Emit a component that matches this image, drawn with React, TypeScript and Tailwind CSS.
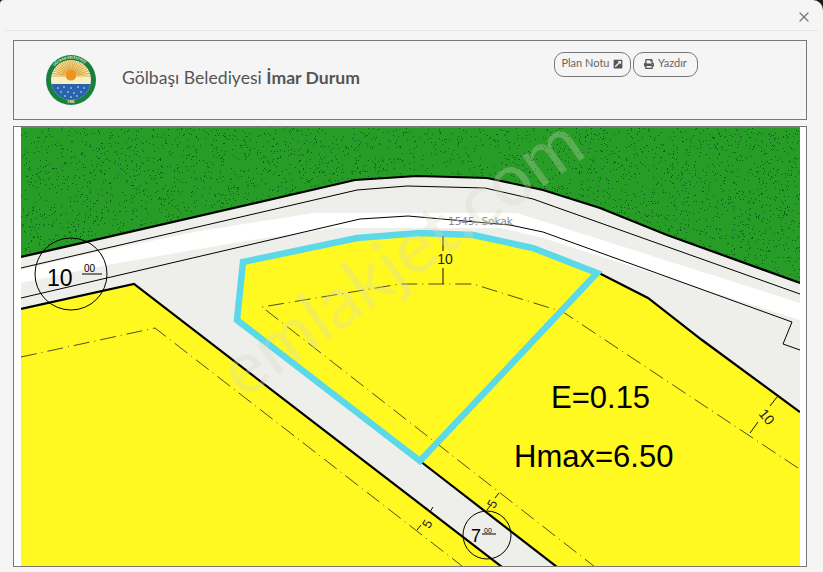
import { FaExternalLinkSquareAlt, FaPrint } from "react-icons/fa";
import { X } from "lucide-react";

// speckle on the green area, seeded so that it stays the same on every load
function speckle(count: number) {
  let seed = 7919;
  const next = () => {
    seed = (seed * 16807) % 2147483647;
    return seed / 2147483647;
  };
  let d = "";
  for (let i = 0; i < count; i++) {
    const x = 21 + Math.round(next() * 779);
    const y = 127 + Math.round(next() * 160);
    d += `M${x} ${y}h1v1h-1z`;
  }
  return d;
}

const dots = speckle(5200);

function Logo() {
  const rays = Array.from({ length: 23 }).map((_, i) => {
    const a = Math.PI + (i * Math.PI) / 22;
    return {
      x1: 25 + Math.cos(a) * 6,
      y1: 21 + Math.sin(a) * 6,
      x2: 25 + Math.cos(a) * 22,
      y2: 21 + Math.sin(a) * 22,
    };
  });
  const water = [
    [12, 33], [18, 32], [25, 33], [32, 32], [38, 33], [15, 37], [22, 37],
    [28, 38], [35, 37], [19, 41], [25, 42], [31, 41],
  ];

  return (
    <svg viewBox="0 0 50 50" className="w-[50px] h-[50px]">
      <clipPath id="logo-inner">
        <circle cx="25" cy="25" r="20" />
      </clipPath>
      <circle cx="25" cy="25" r="25" fill="#17803f" />
      <circle cx="25" cy="25" r="20" fill="#f7efc6" />
      <g clipPath="url(#logo-inner)">
        <g stroke="#dfae45" strokeWidth="1.2">
          {rays.map((r, i) => (
            <line key={i} x1={r.x1} y1={r.y1} x2={r.x2} y2={r.y2} />
          ))}
        </g>
        <rect x="0" y="29" width="50" height="21" fill="#2a63ad" />
        {water.map(([x, y], i) => (
          <circle key={i} cx={x} cy={y} r="0.8" fill="#dff0ff" />
        ))}
      </g>
      <circle cx="25" cy="20" r="5.6" fill="#ee9420" />
      <path id="logo-arc" d="M3.5 25a21.5 21.5 0 0 1 43 0" fill="none" />
      <text fontSize="3.4" fill="#e8f5e0" fontFamily="Lato, sans-serif" fontWeight="700">
        <textPath href="#logo-arc" startOffset="22%">GÖLBAŞI BELEDİYESİ</textPath>
      </text>
      <text x="25" y="48.4" fontSize="3.2" textAnchor="middle" fill="#ffffff" fontFamily="Lato, sans-serif" fontWeight="700">
        1985
      </text>
    </svg>
  );
}

function PlanMap() {
  return (
    <svg viewBox="21 127 779 439" className="block w-[779px] h-[439px]">
      <rect x="21" y="127" width="779" height="439" fill="#eeeeea" />

      {/* green area */}
      <path d="M21 127H800V283L667 235L600 208L543 190L487 178L417 176L355 180L21 257Z" fill="#279d27" />
      <clipPath id="green-clip">
        <path d="M21 127H800V283L667 235L600 208L543 190L487 178L417 176L355 180L21 257Z" />
      </clipPath>
      <path d={dots} fill="#0b5f14" clipPath="url(#green-clip)" />
      <path d="M21 127H800" stroke="#6f9f6f" strokeWidth="1" />

      {/* white band of the road */}
      <path d="M21 270L107 250L200 231L313 213H517L800 303V320L543 238L500 228H400L333 228L233 243L107 265L21 283Z" fill="#ffffff" />

      {/* parcels */}
      <path d="M21 309L134 284L502 567H21Z" fill="#fff921" />
      <path d="M243 262L357 238L420 233L473 235L533 248L597 273L648 298L702 340L800 412V566H557L420 461L236 320Z" fill="#fff921" />

      {/* road lines */}
      <g fill="none" stroke="#000000">
        <path d="M21 257L355 180L417 176L487 178L543 190L600 208L667 235L800 283" strokeWidth="2.2" />
        <path d="M21 268L357 190L407 186L485 188L533 199L800 294" strokeWidth="1" />
        <path d="M21 298L360 219L408 216L510 225L543 232L792 322L783 344L800 350" strokeWidth="1" />
        <path d="M21 309L134 284L502 567" strokeWidth="2.2" />
        <path d="M597 272L648 298L702 340L800 412" strokeWidth="2.2" />
        <path d="M420 461L557 567" strokeWidth="2.2" />
      </g>

      {/* setback lines */}
      <g fill="none" stroke="#222222" strokeWidth="0.8" strokeDasharray="16 5 1 5">
        <path d="M21 357L155 328L462 566" />
        <path d="M798 468L563 312L473 284L400 284L262 307L595 567" />
      </g>

      {/* selected parcel */}
      <path d="M243 262L357 238L420 233L473 235L533 248L597 273L420 461L237 320Z" fill="none" stroke="#5bd9e9" strokeWidth="6.5" />

      {/* dimension ticks */}
      <g stroke="#111111" strokeWidth="1">
        <path d="M443 236V251M443 268V284" />
        <path d="M777 397L770 406M758 422L750 433" />
        <path d="M499 493L495 498M490 506L487 510" />
        <path d="M417 530L421 525M430 512L433 507" />
      </g>
      <g fontFamily="'Liberation Sans', sans-serif" fill="#222222">
        <text x="445" y="264" fontSize="14" textAnchor="middle">10</text>
        <text x="0" y="0" fontSize="14" textAnchor="middle" transform="translate(763 420) rotate(50)">10</text>
        <text x="0" y="0" fontSize="13" textAnchor="middle" transform="translate(496 506) rotate(-60)">5</text>
        <text x="0" y="0" fontSize="13" textAnchor="middle" transform="translate(431 526) rotate(-60)">5</text>
      </g>

      {/* road width circles */}
      <g fill="none" stroke="#000000" strokeWidth="1">
        <circle cx="71" cy="274" r="36" />
        <circle cx="487" cy="535" r="24" />
        <path d="M82 274H102M482 534H496" />
      </g>
      <g fontFamily="'Liberation Sans', sans-serif" fill="#000000">
        <text x="47" y="286" fontSize="23">10</text>
        <text x="84" y="272" fontSize="10">00</text>
        <text x="471" y="542" fontSize="18">7</text>
        <text x="484" y="533" fontSize="7">00</text>
        <text x="551" y="408" fontSize="31">E=0.15</text>
        <text x="514" y="467" fontSize="31">Hmax=6.50</text>
      </g>
      <text x="448" y="225" fontSize="10.5" fill="#8a8a8a" fontFamily="'DejaVu Sans', sans-serif">
        1545. Sokak
      </text>

      {/* watermark */}
      <text
        x="0"
        y="0"
        fontSize="73"
        fill="#d8d8c0"
        opacity="0.3"
        fontFamily="Lato, sans-serif"
        transform="translate(243 400) rotate(-35.4)"
      >
        emlakjet.com
      </text>
    </svg>
  );
}

export default function App() {
  return (
    <div className="w-[823px] h-[572px] overflow-hidden bg-[#1a1a1a] font-['Lato',sans-serif]">
      <div className="h-full bg-[#f5f5f5] rounded-tl-[4px] rounded-tr-[10px] px-[13px]">
        <div className="-mx-[8px] h-[31px] border-b border-[#e5e5e5] flex items-center justify-end pr-[6px]">
          <X className="w-[16px] h-[16px] text-[#777777] mt-[4px]" strokeWidth={1.75} />
        </div>

        <div className="mt-[9px] w-[794px] h-[80px] border border-[#777777] flex items-center">
          <div className="ml-[32px] mr-[26px]">
            <Logo />
          </div>
          <h1 className="text-[17.6px] text-[#555555] whitespace-nowrap mb-[3px]">
            Gölbaşı Belediyesi <span className="font-bold">İmar Durum</span>
          </h1>
          <div className="ml-[194px] self-start mt-[11px] flex gap-[2px] text-[11px] text-[#666666]">
            <button className="h-[25px] w-[77px] pb-[2px] rounded-[10px] border border-[#777777] flex items-center justify-center gap-[4px]">
              Plan Notu <FaExternalLinkSquareAlt className="w-[10px] h-[10px] text-[#555555]" />
            </button>
            <button className="h-[25px] w-[65px] pb-[2px] rounded-[10px] border border-[#777777] flex items-center justify-center gap-[4px]">
              <FaPrint className="w-[10px] h-[10px] text-[#555555]" /> Yazdır
            </button>
          </div>
        </div>

        <div className="mt-[6px] w-[794px] h-[441px] border border-[#777777] bg-white pl-[7px] overflow-hidden">
          <PlanMap />
        </div>
      </div>
    </div>
  );
}
